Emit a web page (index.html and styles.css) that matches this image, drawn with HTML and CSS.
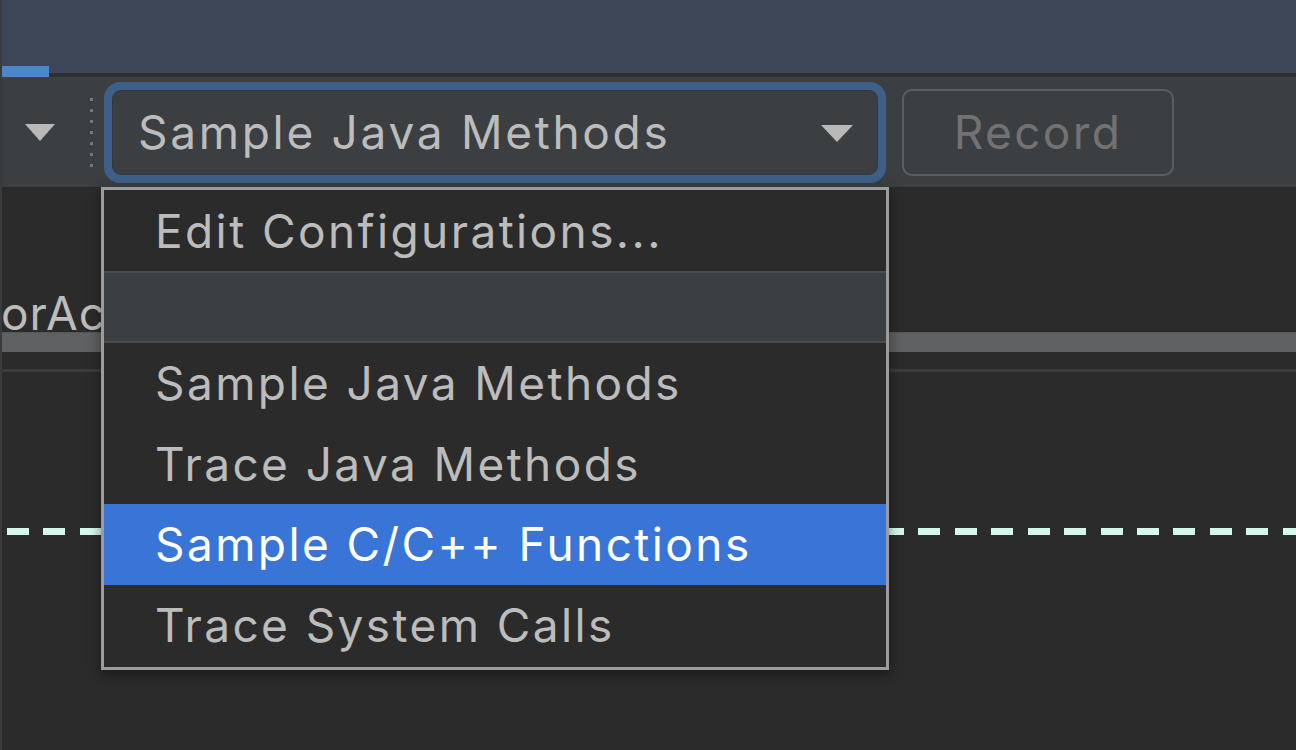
FILE: index.html
```html
<!DOCTYPE html>
<html>
<head>
<meta charset="utf-8">
<link rel="stylesheet" href="styles.css">
</head>
<body>
<div class="app">
  <div class="topbar">
    <div class="tab-indicator"></div>
  </div>
  <div class="toolbar">
    <div class="small-arrow"></div>
    <div class="dots"><span></span><span></span><span></span><span></span><span></span><span></span><span></span></div>
    <div class="combo-ring">
      <div class="combo">
        <span class="combo-text">Sample Java Methods</span>
        <span class="combo-arrow"></span>
      </div>
    </div>
    <div class="record">Record</div>
  </div>
  <div class="content">
    <div class="label-row"><span class="label">orAc</span></div>
    <div class="gray-bar"></div>
    <div class="thin-line"></div>
    <div class="dash-line"></div>
  </div>
  <div class="popup">
    <div class="item">Edit Configurations...</div>
    <div class="sep"></div>
    <div class="item">Sample Java Methods</div>
    <div class="item">Trace Java Methods</div>
    <div class="item selected">Sample C/C++ Functions</div>
    <div class="item">Trace System Calls</div>
  </div>
</div>
</body>
</html>
```
FILE: styles.css
```css
* { box-sizing: border-box; }
html, body { margin: 0; padding: 0; }
body {
  width: 1296px;
  height: 750px;
  overflow: hidden;
  background: #2b2b2b;
  font-family: Inter, "Open Sans", "Liberation Sans", sans-serif;
}
.app {
  position: relative;
  width: 1296px;
  height: 750px;
  border-left: 2px solid #3a3b3d;
  background: #2b2b2b;
}
.topbar {
  height: 77px;
  background: #3c4656;
  border-bottom: 4px solid #2e3033;
  position: relative;
}
.tab-indicator {
  position: absolute;
  left: 0;
  bottom: -4px;
  width: 47px;
  height: 11px;
  background: #4a88c7;
}
.toolbar {
  height: 110px;
  background: #3c3f41;
  display: flex;
  align-items: center;
}
.small-arrow {
  width: 0;
  height: 0;
  margin-left: 23px;
  border-left: 15px solid transparent;
  border-right: 15px solid transparent;
  border-top: 17px solid #b9b9b9;
}
.dots {
  margin-left: 35px;
  display: flex;
  flex-direction: column;
  gap: 8px;
}
.dots span {
  display: block;
  width: 3px;
  height: 3px;
  background: #75777a;
}
.combo-ring {
  margin-left: 11px;
  width: 782px;
  height: 101px;
  border-radius: 16px;
  background: #3e6088;
  padding: 8px;
}
.combo {
  height: 100%;
  border-radius: 9px;
  background: #3c3f41;
  border: 1px solid #35383b;
  display: flex;
  align-items: center;
  justify-content: space-between;
  padding: 0 24px 0 25px;
}
.combo-text {
  color: #bcbcbc;
  font-size: 46px;
  letter-spacing: 2.7px;
}
.combo-arrow {
  width: 0;
  height: 0;
  border-left: 16px solid transparent;
  border-right: 16px solid transparent;
  border-top: 17px solid #b9b9b9;
  margin-top: 2px;
}
.record {
  margin-left: 16px;
  width: 272px;
  height: 87px;
  border: 2px solid #5b5d5f;
  border-radius: 10px;
  color: #727272;
  font-size: 46px;
  letter-spacing: 2.4px;
  display: flex;
  align-items: center;
  justify-content: center;
}
.content {
  display: flex;
  flex-direction: column;
}
.label-row {
  height: 145px;
  display: flex;
  align-items: flex-end;
  overflow: hidden;
  white-space: nowrap;
}
.label {
  color: #bcbcbc;
  font-size: 46px;
  letter-spacing: 1px;
  line-height: 1;
  margin-left: -1px;
  margin-bottom: -4px;
}
.gray-bar {
  height: 20px;
  background: #5e6062;
  border-top: 1px solid #55575a;
}
.thin-line {
  height: 3px;
  margin-top: 17px;
  background: #3a3c3e;
}
.dash-line {
  margin-top: 156px;
  height: 7px;
  background: repeating-linear-gradient(to right, transparent 0, transparent 5px, #d5f8ee 5px, #d5f8ee 27px, transparent 27px, transparent 36.45px);
}
.popup {
  position: absolute;
  left: 99px;
  top: 187px;
  width: 788px;
  height: 483px;
  border: 3px solid #9c9c9c;
  background: #2b2b2b;
  box-shadow: 0 4px 12px rgba(0,0,0,0.45);
  display: flex;
  flex-direction: column;
}
.item {
  height: 80.5px;
  display: flex;
  align-items: center;
  padding-left: 51px;
  color: #bcbcbc;
  font-size: 46px;
  letter-spacing: 2.4px;
}
.item:first-child { height: 81px; }
.item.selected {
  background: #3875d7;
  color: #ffffff;
}
.sep {
  height: 72px;
  background: #3c3f41;
  border-top: 2px solid #494b4d;
  border-bottom: 2px solid #494b4d;
}
```
